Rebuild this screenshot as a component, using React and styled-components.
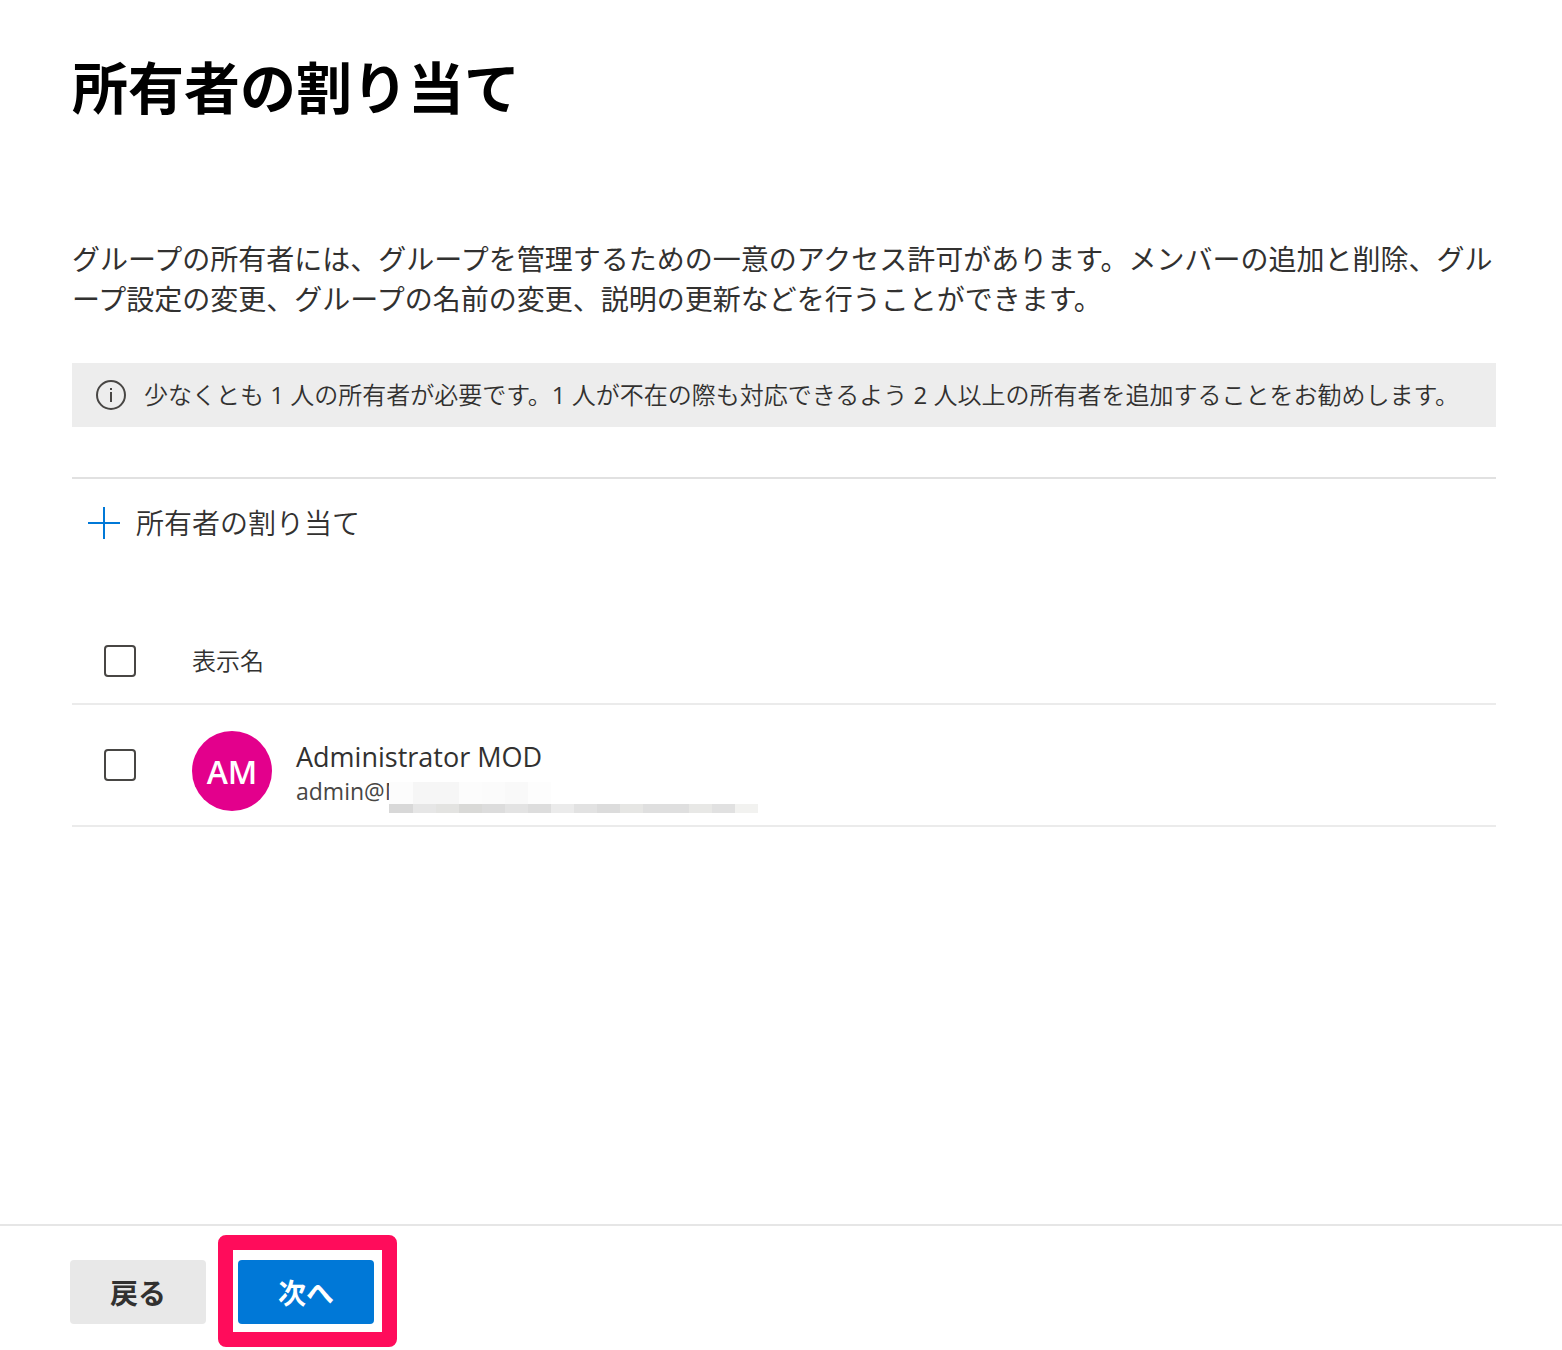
// App.jsx
import React, { useState } from "react";
import styled, { createGlobalStyle } from "styled-components";

const GlobalStyle = createGlobalStyle`
  *, *::before, *::after {
    box-sizing: border-box;
  }

  body {
    margin: 0;
    background: #fff;
    color: #323130;
    font-family: "Open Sans", "Noto Sans CJK JP", sans-serif;
  }

  button, input {
    font-family: inherit;
  }
`;

const Page = styled.div`
  display: flex;
  flex-direction: column;
  min-height: 100vh;
`;

const Content = styled.main`
  flex: 1;
  padding: 47px 66px 48px 72px;
`;

const Title = styled.h1`
  margin: 0 0 112px;
  color: #000;
  font-size: 56px;
  font-weight: 600;
  line-height: 80px;
`;

const Description = styled.p`
  margin: 0 0 44px;
  font-size: 28px;
  line-height: 40px;
`;

const MessageBar = styled.div`
  display: flex;
  align-items: center;
  gap: 18px;
  min-height: 64px;
  margin-bottom: 50px;
  padding: 0 24px;
  background: #ededed;
  font-size: 24px;
  font-weight: 350;
  line-height: 32px;

  svg {
    flex: none;
  }
`;

// Open Sans drops to its light face at 350, so the digits get the regular one
const Count = styled.span`
  font-weight: 400;
`;

const CommandBar = styled.div`
  display: flex;
  align-items: center;
  height: 90px;
  padding: 0 16px;
  border-top: 2px solid #e1e1e1;
`;

const CommandButton = styled.button`
  display: flex;
  align-items: center;
  gap: 16px;
  padding: 0;
  border: 0;
  background: none;
  color: #323130;
  font-size: 28px;
  font-weight: 350;
  line-height: 40px;
  cursor: pointer;
`;

const OwnerTable = styled.table`
  width: 100%;
  margin-top: 51px;
  border-collapse: collapse;
  text-align: left;
`;

const Row = styled.tr`
  height: ${({ $header }) => ($header ? "86px" : "122px")};
  border-bottom: 2px solid #ebebeb;
`;

const HeaderCell = styled.th`
  padding: 0;
  font-size: 24px;
  font-weight: 350;
  line-height: 32px;
`;

const CheckCell = styled.td`
  width: 120px;
  padding: 0 0 0 32px;
`;

const Checkbox = styled.input`
  display: block;
  width: 32px;
  height: 32px;
  margin: 0;
  appearance: none;
  border: 2px solid #484644;
  border-radius: 4px;
  background: #fff;
  cursor: pointer;

  &:checked {
    border-color: #0078d7;
    background: #0078d7;
  }
`;

const PersonaCell = styled.td`
  padding: 12px 0 0;
`;

const Persona = styled.div`
  display: flex;
  align-items: center;
  gap: 24px;
`;

const Avatar = styled.div`
  display: flex;
  flex: none;
  align-items: center;
  justify-content: center;
  width: 80px;
  height: 80px;
  border-radius: 50%;
  background: #e3008c;
  color: #fff;
  font-size: 32px;
  font-weight: 600;
`;

const Details = styled.div`
  padding-top: 4px;
`;

const Name = styled.div`
  font-size: 27px;
  line-height: 36px;
`;

const Email = styled.div`
  position: relative;
  color: #484644;
  font-size: 23px;
  line-height: 32px;
`;

const Mosaic = styled.svg`
  position: absolute;
  top: 7px;
  left: 93px;
`;

const Footer = styled.footer`
  display: flex;
  gap: 32px;
  padding: 34px 70px 26px;
  border-top: 2px solid #e6e6e6;
`;

const Button = styled.button`
  min-width: 136px;
  height: 64px;
  border: 0;
  border-radius: 4px;
  background: ${({ $primary }) => ($primary ? "#0078d7" : "#e8e8e8")};
  color: ${({ $primary }) => ($primary ? "#fff" : "#323130")};
  font-size: 28px;
  font-weight: 600;
  cursor: pointer;
`;

const Highlight = styled.div`
  position: relative;

  &::after {
    content: "";
    position: absolute;
    inset: -25px -23px -23px -20px;
    border: 15px solid #ff0c5b;
    border-radius: 8px;
    pointer-events: none;
  }
`;

const lightTiles = ["#fcfcfc", "#f6f6f6", "#f6f6f6", "#fcfcfc", "#fbfbfb", "#f9f9f9", "#fdfdfd"];
const darkTiles = [
  "#d8d8d8", "#e6e6e6", "#e3e3e1", "#d9d9d7", "#dcdcdc", "#e3e3e3", "#dddddd", "#ebebeb",
  "#e2e2e2", "#dcdcdc", "#e6e6e4", "#dfdfdf", "#dfdfdf", "#e8e8e6", "#e1e1e1", "#f2f2f0",
];

function MosaicStrip() {
  return (
    <Mosaic width="369" height="31" viewBox="0 0 369 31" shapeRendering="crispEdges" aria-hidden="true">
      {lightTiles.map((fill, i) => (
        <rect key={i} x={i ? i * 23 + 1 : 0} y="0" width={i ? 23 : 24} height="22" fill={fill} />
      ))}
      {darkTiles.map((fill, i) => (
        <rect key={i} x={i ? i * 23 + 1 : 0} y="22" width={i ? 23 : 24} height="9" fill={fill} />
      ))}
    </Mosaic>
  );
}

function InfoIcon() {
  return (
    <svg width="30" height="30" viewBox="0 0 30 30" fill="none" aria-hidden="true">
      <circle cx="15" cy="15" r="14" stroke="#484644" strokeWidth="2" />
      <path d="M15 8v2M15 12v10" stroke="#484644" strokeWidth="2" />
    </svg>
  );
}

function PlusIcon() {
  return (
    <svg width="32" height="32" viewBox="0 0 32 32" aria-hidden="true">
      <path d="M16 0v32M0 16h32" stroke="#0078d7" strokeWidth="2" />
    </svg>
  );
}

export default function App() {
  const [selected, setSelected] = useState(false);
  const toggle = () => setSelected(!selected);

  return (
    <Page lang="ja">
      <GlobalStyle />
      <Content>
        <Title>所有者の割り当て</Title>
        <Description>
          グループの所有者には、グループを管理するための一意のアクセス許可があります。メンバーの追加と削除、グループ設定の変更、グループの名前の変更、説明の更新などを行うことができます。
        </Description>
        <MessageBar>
          <InfoIcon />
          <span>
            少なくとも <Count>1</Count> 人の所有者が必要です。<Count>1</Count> 人が不在の際も対応できるよう <Count>2</Count> 人以上の所有者を追加することをお勧めします。
          </span>
        </MessageBar>

        <CommandBar>
          <CommandButton type="button">
            <PlusIcon />
            所有者の割り当て
          </CommandButton>
        </CommandBar>

        <OwnerTable>
          <thead>
            <Row $header>
              <CheckCell>
                <Checkbox type="checkbox" aria-label="すべて選択" checked={selected} onChange={toggle} />
              </CheckCell>
              <HeaderCell scope="col">表示名</HeaderCell>
            </Row>
          </thead>
          <tbody>
            <Row>
              <CheckCell>
                <Checkbox type="checkbox" aria-labelledby="owner-name" checked={selected} onChange={toggle} />
              </CheckCell>
              <PersonaCell>
                <Persona>
                  <Avatar>AM</Avatar>
                  <Details>
                    <Name id="owner-name">Administrator MOD</Name>
                    <Email>
                      admin@M
                      <MosaicStrip />
                    </Email>
                  </Details>
                </Persona>
              </PersonaCell>
            </Row>
          </tbody>
        </OwnerTable>
      </Content>

      <Footer>
        <Button type="button">戻る</Button>
        <Highlight>
          <Button type="button" $primary>次へ</Button>
        </Highlight>
      </Footer>
    </Page>
  );
}
